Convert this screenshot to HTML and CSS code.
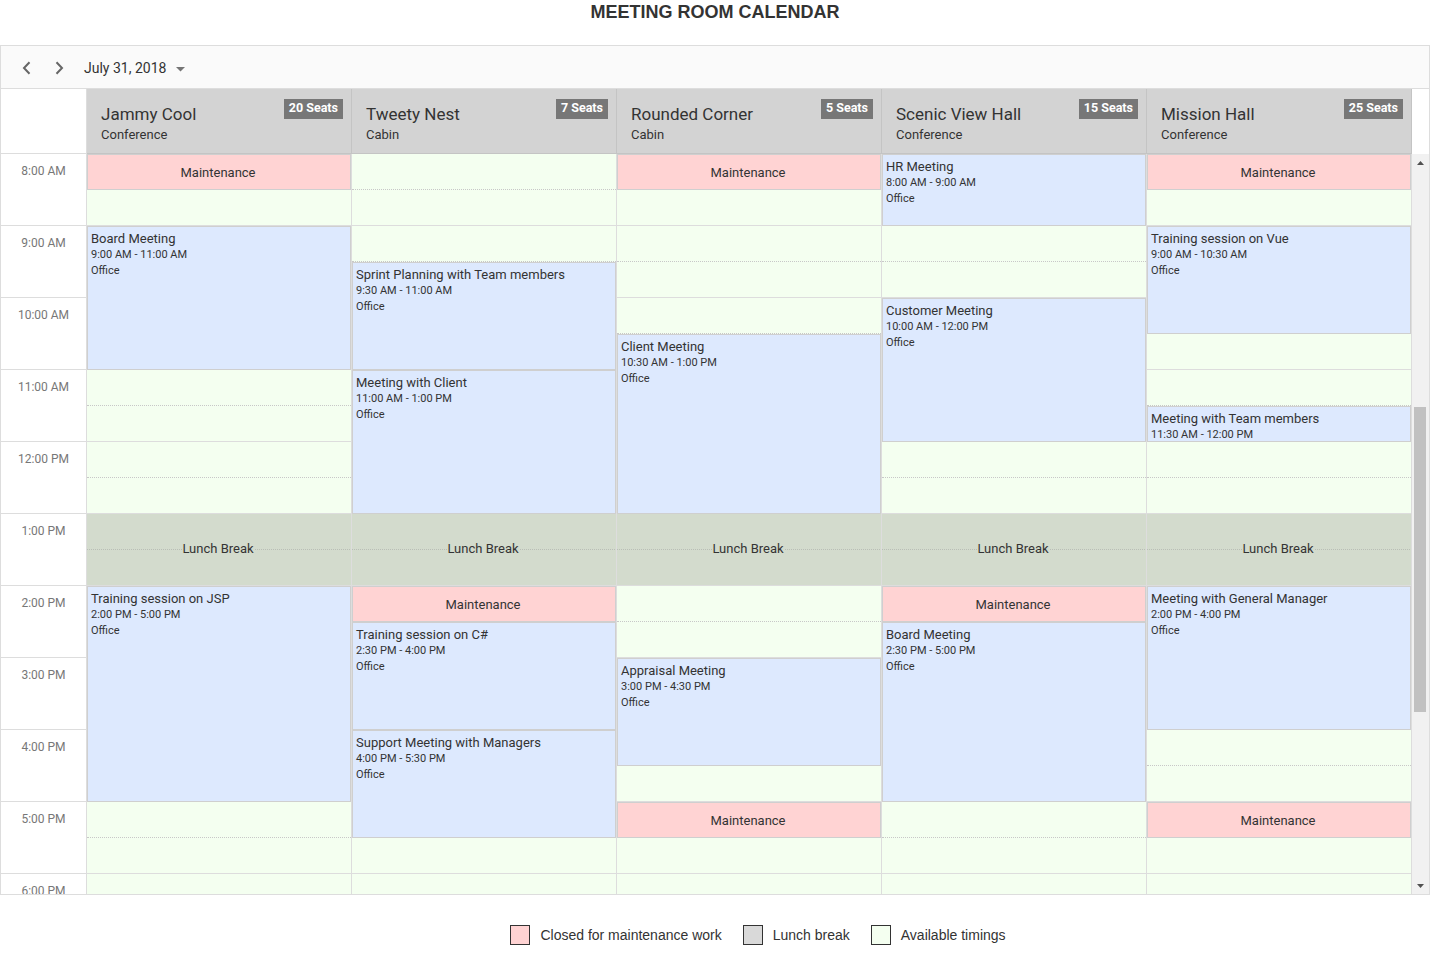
FILE: index.html
```html
<!DOCTYPE html>
<html lang="en">
<head>
<meta charset="utf-8">
<title>Meeting Room Calendar</title>
<link rel="stylesheet" href="styles.css">
</head>
<body>
<h1 class="title">MEETING ROOM CALENDAR</h1>
<div class="scheduler">
  <div class="toolbar">
    <span class="nav"><svg width="9" height="14" viewBox="0 0 9 14"><path d="M7.5 1.2 L2 7 L7.5 12.8" fill="none" stroke="#666" stroke-width="2"/></svg></span>
    <span class="nav"><svg width="9" height="14" viewBox="0 0 9 14"><path d="M1.5 1.2 L7 7 L1.5 12.8" fill="none" stroke="#666" stroke-width="2"/></svg></span>
    <span class="date">July 31, 2018</span>
    <svg class="caret" width="9" height="5" viewBox="0 0 9 5"><polygon points="0,0 9,0 4.5,4.5" fill="#757575"/></svg>
  </div>

  <div class="header-row">
    <div class="corner"></div>
    <div class="res-head"><div class="res-info"><div class="res-name">Jammy Cool</div><div class="res-type">Conference</div></div><span class="seats">20 Seats</span></div>
    <div class="res-head"><div class="res-info"><div class="res-name">Tweety Nest</div><div class="res-type">Cabin</div></div><span class="seats">7 Seats</span></div>
    <div class="res-head"><div class="res-info"><div class="res-name">Rounded Corner</div><div class="res-type">Cabin</div></div><span class="seats">5 Seats</span></div>
    <div class="res-head"><div class="res-info"><div class="res-name">Scenic View Hall</div><div class="res-type">Conference</div></div><span class="seats">15 Seats</span></div>
    <div class="res-head"><div class="res-info"><div class="res-name">Mission Hall</div><div class="res-type">Conference</div></div><span class="seats">25 Seats</span></div>
    <div class="head-gap"></div>
  </div>

  <div class="body">
    <div class="times">
      <div class="time">8:00 AM</div>
      <div class="time">9:00 AM</div>
      <div class="time">10:00 AM</div>
      <div class="time">11:00 AM</div>
      <div class="time">12:00 PM</div>
      <div class="time">1:00 PM</div>
      <div class="time">2:00 PM</div>
      <div class="time">3:00 PM</div>
      <div class="time">4:00 PM</div>
      <div class="time">5:00 PM</div>
      <div class="time">6:00 PM</div>
    </div>

    <!-- Jammy Cool -->
    <div class="col">
      <div class="maint">Maintenance</div>
      <div class="free b"></div>
      <div class="ev h4"><div class="ev-title">Board Meeting</div><div class="ev-time">9:00 AM - 11:00 AM</div><div class="ev-loc">Office</div></div>
      <div class="free a"></div><div class="free b"></div><div class="free a"></div><div class="free b"></div>
      <div class="lunch"><span>Lunch Break</span></div>
      <div class="ev h6"><div class="ev-title">Training session on JSP</div><div class="ev-time">2:00 PM - 5:00 PM</div><div class="ev-loc">Office</div></div>
      <div class="free a"></div><div class="free b"></div><div class="free a"></div><div class="free b"></div>
    </div>

    <!-- Tweety Nest -->
    <div class="col">
      <div class="free a"></div><div class="free b"></div><div class="free a"></div>
      <div class="ev h3"><div class="ev-title">Sprint Planning with Team members</div><div class="ev-time">9:30 AM - 11:00 AM</div><div class="ev-loc">Office</div></div>
      <div class="ev h4"><div class="ev-title">Meeting with Client</div><div class="ev-time">11:00 AM - 1:00 PM</div><div class="ev-loc">Office</div></div>
      <div class="lunch"><span>Lunch Break</span></div>
      <div class="maint">Maintenance</div>
      <div class="ev h3"><div class="ev-title">Training session on C#</div><div class="ev-time">2:30 PM - 4:00 PM</div><div class="ev-loc">Office</div></div>
      <div class="ev h3"><div class="ev-title">Support Meeting with Managers</div><div class="ev-time">4:00 PM - 5:30 PM</div><div class="ev-loc">Office</div></div>
      <div class="free b"></div><div class="free a"></div><div class="free b"></div>
    </div>

    <!-- Rounded Corner -->
    <div class="col">
      <div class="maint">Maintenance</div>
      <div class="free b"></div><div class="free a"></div><div class="free b"></div><div class="free a"></div>
      <div class="ev h5"><div class="ev-title">Client Meeting</div><div class="ev-time">10:30 AM - 1:00 PM</div><div class="ev-loc">Office</div></div>
      <div class="lunch"><span>Lunch Break</span></div>
      <div class="free a"></div><div class="free b"></div>
      <div class="ev h3"><div class="ev-title">Appraisal Meeting</div><div class="ev-time">3:00 PM - 4:30 PM</div><div class="ev-loc">Office</div></div>
      <div class="free b"></div>
      <div class="maint">Maintenance</div>
      <div class="free b"></div><div class="free a"></div><div class="free b"></div>
    </div>

    <!-- Scenic View Hall -->
    <div class="col">
      <div class="ev h2"><div class="ev-title">HR Meeting</div><div class="ev-time">8:00 AM - 9:00 AM</div><div class="ev-loc">Office</div></div>
      <div class="free a"></div><div class="free b"></div>
      <div class="ev h4"><div class="ev-title">Customer Meeting</div><div class="ev-time">10:00 AM - 12:00 PM</div><div class="ev-loc">Office</div></div>
      <div class="free a"></div><div class="free b"></div>
      <div class="lunch"><span>Lunch Break</span></div>
      <div class="maint">Maintenance</div>
      <div class="ev h5"><div class="ev-title">Board Meeting</div><div class="ev-time">2:30 PM - 5:00 PM</div><div class="ev-loc">Office</div></div>
      <div class="free a"></div><div class="free b"></div><div class="free a"></div><div class="free b"></div>
    </div>

    <!-- Mission Hall -->
    <div class="col">
      <div class="maint">Maintenance</div>
      <div class="free b"></div>
      <div class="ev h3"><div class="ev-title">Training session on Vue</div><div class="ev-time">9:00 AM - 10:30 AM</div><div class="ev-loc">Office</div></div>
      <div class="free b"></div><div class="free a"></div>
      <div class="ev h1"><div class="ev-title">Meeting with Team members</div><div class="ev-time">11:30 AM - 12:00 PM</div></div>
      <div class="free a"></div><div class="free b"></div>
      <div class="lunch"><span>Lunch Break</span></div>
      <div class="ev h4"><div class="ev-title">Meeting with General Manager</div><div class="ev-time">2:00 PM - 4:00 PM</div><div class="ev-loc">Office</div></div>
      <div class="free a"></div><div class="free b"></div>
      <div class="maint">Maintenance</div>
      <div class="free b"></div><div class="free a"></div><div class="free b"></div>
    </div>

    <div class="scrollbar">
      <div class="sb-btn"><svg width="7" height="4" viewBox="0 0 7 4"><polygon points="0,4 7,4 3.5,0" fill="#505050"/></svg></div>
      <div class="sb-track"><div class="thumb"></div></div>
      <div class="sb-btn"><svg width="7" height="4" viewBox="0 0 7 4"><polygon points="0,0 7,0 3.5,4" fill="#505050"/></svg></div>
    </div>
  </div>
</div>

<div class="legend">
  <div class="lg-item"><span class="sw sw-maint"></span><span>Closed for maintenance work</span></div>
  <div class="lg-item"><span class="sw sw-lunch"></span><span>Lunch break</span></div>
  <div class="lg-item"><span class="sw sw-free"></span><span>Available timings</span></div>
</div>
</body>
</html>
```

FILE: styles.css
```css
body {
  margin: 0;
  width: 1430px;
  background: #fff;
  color: #333;
  font-family: Roboto, "Noto Sans", sans-serif;
}

.title {
  margin: 0;
  height: 45px;
  box-sizing: border-box;
  padding-top: 2px;
  font: bold 18px/20px "Liberation Sans", Arial, sans-serif;
  color: #333;
  text-align: center;
}

.scheduler {
  border: 1px solid #ddd;
}

/* toolbar */
.toolbar {
  height: 43px;
  box-sizing: border-box;
  border-bottom: 1px solid #ddd;
  background: #fafafa;
  display: flex;
  align-items: center;
  padding-left: 9px;
  padding-top: 2px;
}
.nav {
  width: 33px;
  height: 30px;
  display: flex;
  align-items: center;
  justify-content: center;
}
.date {
  margin-left: 8px;
  font-size: 14px;
  line-height: 20px;
  color: #333;
}
.caret {
  margin-left: 10px;
  margin-top: 2px;
}

/* resource header */
.header-row {
  display: flex;
  height: 65px;
}
.corner {
  width: 86px;
  flex-shrink: 0;
  box-sizing: border-box;
  border-right: 1px solid #ddd;
  border-bottom: 1px solid #ddd;
  background: #fff;
}
.res-head {
  width: 265px;
  flex-shrink: 0;
  box-sizing: border-box;
  border-right: 1px solid #c4c4c4;
  border-bottom: 1px solid #c4c4c4;
  background: #d3d3d3;
  display: flex;
  justify-content: space-between;
  align-items: flex-start;
  padding: 10px 8px 0 14px;
}
.res-info {
  padding-top: 5px;
}
.res-name {
  font-size: 17px;
  line-height: 20px;
  color: #333;
}
.res-type {
  margin-top: 3px;
  font-size: 13px;
  line-height: 16px;
  color: #333;
}
.seats {
  height: 20px;
  box-sizing: border-box;
  padding: 2px 5px 0;
  background: #777;
  color: #fff;
  font-size: 12.5px;
  line-height: 14px;
  font-weight: 700;
}
.head-gap {
  flex: 1;
  background: #fff;
}

/* body grid */
.body {
  display: flex;
  height: 740px;
  overflow: hidden;
}
.times {
  width: 86px;
  flex-shrink: 0;
  box-sizing: border-box;
  border-right: 1px solid #ddd;
  background: #fff;
}
.time {
  height: 72px;
  box-sizing: border-box;
  border-bottom: 1px solid #ddd;
  padding-top: 9px;
  text-align: center;
  font-size: 12px;
  line-height: 16px;
  color: #777;
}
.col {
  width: 265px;
  flex-shrink: 0;
  box-sizing: border-box;
  border-right: 1px solid #ddd;
  display: flex;
  flex-direction: column;
}
.free {
  height: 36px;
  flex-shrink: 0;
  box-sizing: border-box;
  background: #f4fff0;
}
.free.a { border-bottom: 1px dotted #c8c8c8; }
.free.b { border-bottom: 1px solid #ddd; }

.maint {
  height: 36px;
  flex-shrink: 0;
  box-sizing: border-box;
  border: 1px solid #cfcfcf;
  background: #ffd3d3;
  display: flex;
  align-items: center;
  justify-content: center;
  font-size: 13px;
  color: #333;
  padding-right: 2px;
}
.lunch {
  height: 72px;
  flex-shrink: 0;
  box-sizing: border-box;
  border-bottom: 1px solid #ddd;
  background-color: #d3dbcd;
  background-image: linear-gradient(to right, #b9beb6 50%, transparent 50%);
  background-size: 2px 1px;
  background-repeat: repeat-x;
  background-position: 0 35px;
  display: flex;
  align-items: center;
  justify-content: center;
  padding-bottom: 2px;
  padding-right: 2px;
}
.lunch span {
  background: #d3dbcd;
  font-size: 13px;
  line-height: 16px;
  color: #333;
}

.ev {
  flex-shrink: 0;
  box-sizing: border-box;
  border: 1px solid #cfcfcf;
  background: #dde9fe;
  padding: 4px 3px 0;
  overflow: hidden;
  color: #333;
}
.h1 { height: 36px; }
.h2 { height: 72px; }
.h3 { height: 108px; }
.h4 { height: 144px; }
.h5 { height: 180px; }
.h6 { height: 216px; }
.ev-title {
  font-size: 13px;
  line-height: 16px;
  white-space: nowrap;
}
.ev-time,
.ev-loc {
  font-size: 11px;
  line-height: 16px;
  white-space: nowrap;
}

/* scrollbar */
.scrollbar {
  flex: 1;
  background: #f1f1f1;
  display: flex;
  flex-direction: column;
}
.sb-btn {
  height: 17px;
  display: flex;
  align-items: center;
  justify-content: center;
}
.sb-track {
  flex: 1;
  padding-top: 236px;
}
.thumb {
  margin-left: 2px;
  width: 12px;
  height: 305px;
  background: #c1c1c1;
}

/* legend */
.legend {
  display: flex;
  justify-content: center;
  gap: 21px;
  padding-left: 86px;
  margin-top: 30px;
  font: 14px/20px "Liberation Sans", Arial, sans-serif;
  color: #333;
}
.lg-item {
  display: flex;
  align-items: center;
  gap: 10px;
}
.sw {
  width: 20px;
  height: 20px;
  box-sizing: border-box;
  border: 1px solid #333;
}
.sw-maint { background: #ffd3d3; }
.sw-lunch { background: #d9d9d9; }
.sw-free { background: #f4fff0; }
```
